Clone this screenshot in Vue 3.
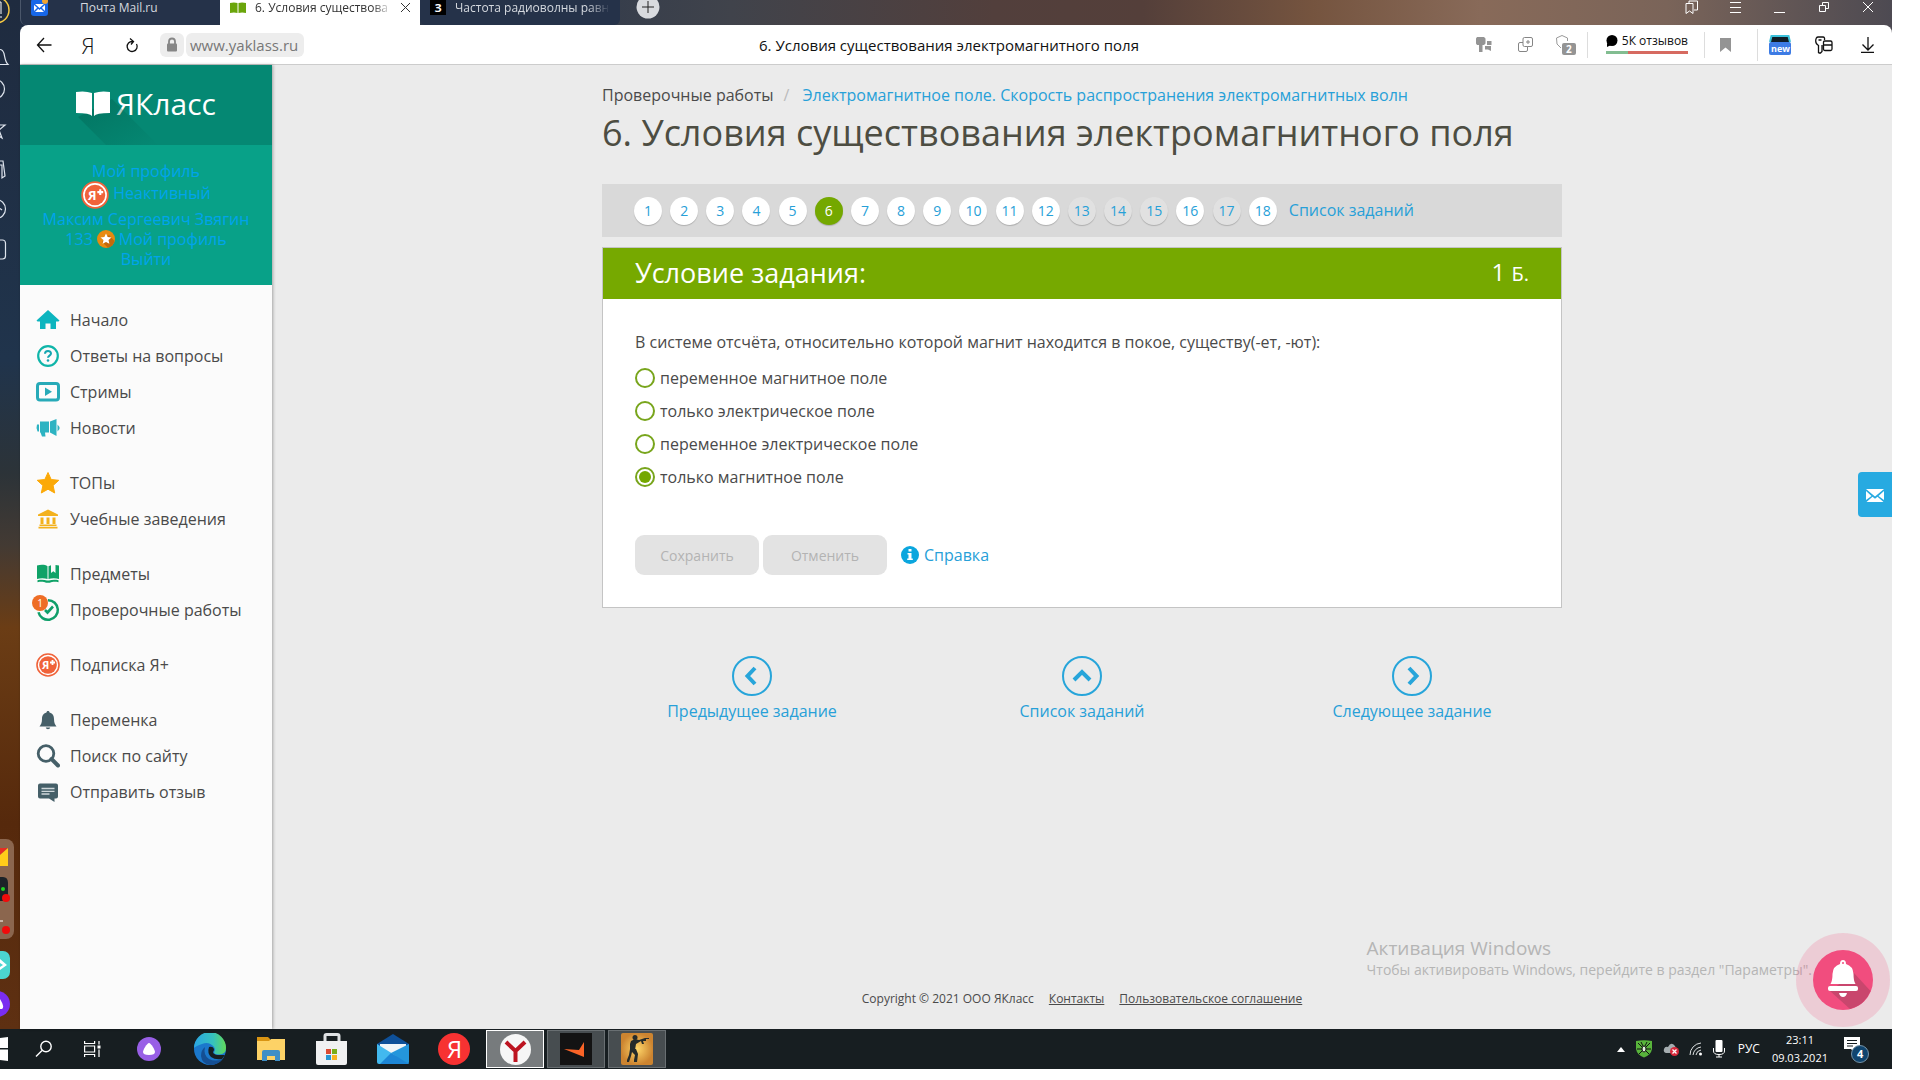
<script setup>
import { ref } from 'vue'

const answer = ref(3)
const options = [
  'переменное магнитное поле',
  'только электрическое поле',
  'переменное электрическое поле',
  'только магнитное поле',
]
const closed = [13, 14, 15, 17]

const plusIcon =
  '<circle cx="12" cy="12" r="11" fill="#fff" stroke="#f0633a" stroke-width="1.6"/><circle cx="12" cy="12" r="8.8" fill="#f0633a"/><text x="6" y="16" font-size="11" font-weight="700" font-family="Open Sans, sans-serif" fill="#fff">Я</text><path d="M14 9.5h5M16.5 7v5" stroke="#fff" stroke-width="1.8"/>'

const menu = [
  [
    { name: 'Начало', icon: '<path fill="#0cb5bf" d="M12 2 23.5 12.500l-1 1H20V21h-5.500v-5.500h-5V21H4v-7.500H1.500l-1-1z"/>' },
    {
      name: 'Ответы на вопросы',
      icon: '<circle cx="12" cy="12" r="9.800" fill="none" stroke="#0fb5a9" stroke-width="2.200"/><path d="M9 9.800C9 6 15 6.200 15 9.500c0 2.200-3 2-3 4.300" fill="none" stroke="#15a5b0" stroke-width="2"/><circle cx="12" cy="16.500" r="1.300" fill="#15a5b0"/>',
    },
    {
      name: 'Стримы',
      icon: '<rect x="1.500" y="3.500" width="21" height="16.500" rx="2.500" fill="none" stroke="#27aab8" stroke-width="3"/><path fill="#27aab8" d="M9 7.500 16 11.800 9 16z"/>',
    },
    {
      name: 'Новости',
      icon: '<path fill="#2db3c2" d="M1 8.500h2v7H1.500L0.500 12zM4 5.500h9v11H9l.5 4H6l-1.500-4H4zM14 5.500 20.500 3v17L14 16.500zM21.500 8.500 23.500 11v2l-2 2.500z"/>',
    },
  ],
  [
    { name: 'ТОПы', icon: '<path fill="#fba908" stroke="#fba908" stroke-linejoin="round" d="m12 1.500 3.200 7 7.600.8-5.700 5.200 1.600 7.500L12 18.200 5.300 22l1.600-7.500L1.200 9.300l7.600-.8z"/>' },
    {
      name: 'Учебные заведения',
      icon: '<path fill="#f3b11c" d="M12 2.500 22 7.500V9H2V7.500zM4.500 10.500h3V17h-3zM10.500 10.500h3V17h-3zM16.500 10.500h3V17h-3zM3.500 17.500h17v1.500h-17zM2.500 19.800h19V21.500h-19z"/>',
    },
  ],
  [
    {
      name: 'Предметы',
      icon: '<path fill="#0fa267" d="M1 3.500c4-1 8-1 10.500.8V17C8.500 16 4 16 1 17zM12.500 4.300 15 3.200V11l2.300-1.800L19.500 11V3l3.500.5V17c-3-1-7.500-1-10.500 0zM1.500 18.200c4-.8 7-.5 9.500.3h2c3-.8 6-1 9.500-.3v2C18 19.500 16 20 14 20.800h-4C8 20 6 19.500 1.500 20.200z"/>',
    },
    {
      name: 'Проверочные работы',
      badge: 1,
      icon: '<path d="M12 2.200a9.800 9.800 0 1 1-9.500 12" fill="none" stroke="#109f6a" stroke-width="2.500"/><path d="m9 12 2.500 2.500L17 8.500" fill="none" stroke="#109f6a" stroke-width="2.600"/>',
    },
  ],
  [{ name: 'Подписка Я+', icon: plusIcon }],
  [
    {
      name: 'Переменка',
      icon: '<path fill="#455f68" d="M12 3c1 0 1.500.7 1.500 1.500C17 5.500 18 8 18 11c0 4 1 5.500 2.500 7.500h-17C5 16.500 6 15 6 11c0-3 1-5.500 4.500-6.500C10.500 3.700 11 3 12 3zM9.800 19.500h4.400c-.3 2.300-4.100 2.300-4.400 0z"/>',
    },
    { name: 'Поиск по сайту', icon: '<circle cx="10" cy="9.500" r="7.800" fill="none" stroke="#455f68" stroke-width="2.800"/><path d="m15.500 15 6.500 6.500" stroke="#455f68" stroke-width="4" stroke-linecap="round"/>' },
    {
      name: 'Отправить отзыв',
      icon: '<path fill="#455f68" d="M4 3.500h16q2 0 2 2v11q0 2-2 2h-1.500V22L13 18.500H4q-2 0-2-2v-11q0-2 2-2z"/><path d="M5.500 8.500h13M5.500 11.300h13M5.500 14h8" stroke="#cfd7da" stroke-width="1.300"/>',
    },
  ],
]

// quick panel on the left edge, only its right side is visible
const rail = [
  '<path d="M0 35.500h8c-3-3-3-7-4-11-1-3-2-4-4-4"/>',
  '<circle cx="-5" cy="20" r="9.500"/>',
  '<path d="M-4 16h9l-6 5 3 8-6-4"/>',
  '<path d="M0 12h3l2 15-3 2V16H0"/>',
  '<circle cx="-4" cy="20" r="9.500"/><path d="M0 19.500 2 21"/>',
  '<rect x="-12" y="11" width="17.500" height="19" rx="3"/>',
]

const prevNext = [
  { name: 'Предыдущее задание', d: 'm23 12-7.500 8 7.500 8' },
  { name: 'Список заданий', d: 'm12 24 8-8 8 8' },
  { name: 'Следующее задание', d: 'm17 12 7.500 8-7.500 8' },
]
</script>

<template>
  <div class="screen">
    <div class="desktop">
      <aside class="rail">
        <svg width="20" height="29" fill="none"><circle cx="-4" cy="10" r="13" stroke="#f5c842" stroke-width="1.500" /><path d="M0 2h1v12M0 17h2" stroke="#fff" /></svg>
        <svg v-for="(r, i) in rail" :key="i" class="rail-icon" width="20" height="40" v-html="r"></svg>
        <div class="rail-panel">
          <svg width="14" height="100">
            <path d="M0 9h8L0 16z" fill="#e52e24" /><path d="M8 9v18H0V16z" fill="#ffcc1a" />
            <path d="M0 38h3q5 0 5 6v18H0z" fill="#1d2328" /><circle cx="3" cy="50" r="2" fill="#21d321" />
            <circle cx="6" cy="59" r="4" fill="#f00b0b" /><path d="M0 82h3" stroke="#fff" /><circle cx="6" cy="91" r="4" fill="#f00b0b" />
          </svg>
        </div>
        <svg class="rail-app" width="20" height="28"><rect x="-18" width="28" height="28" rx="7" fill="#4bd5cf" /><path d="M0 8l7 6-7 5v-3l3-2-3-2z" fill="#fff" /></svg>
        <svg class="rail-app" width="20" height="26"><circle cx="-3" cy="13" r="13" fill="#7a2df0" /><path d="M0 8q5 8 2 10H0z" fill="#fff" /></svg>
      </aside>

      <div class="browser">
        <header class="tabs">
          <div class="tab tab-mail">
            <svg width="17" height="17"><rect width="17" height="17" rx="3" fill="#1767e8" /><path d="M3 5h11v8H3z" fill="#fff" /><path d="m3 5 5.500 5L14 5M3 13l4-4M14 13l-4-4" stroke="#1767e8" fill="none" stroke-width="1.500" /><circle cx="14" cy="2" r="3" fill="#f0a532" /></svg>
            <span>Почта Mail.ru</span>
          </div>
          <div class="tab tab-active">
            <svg width="16" height="14"><path d="M0 2q4-1 7.500 0v10Q4 11 0 12zM8.500 2Q12 1 16 2v10q-4-1-7.500 0z" fill="#6aa50b" /></svg>
            <span class="fade">6. Условия существова</span>
            <button class="plain" aria-label="Закрыть вкладку"><svg width="9" height="9"><path d="m0 0 9 9M9 0 0 9" stroke="#333" /></svg></button>
          </div>
          <div class="tab">
            <b class="znanija">З</b>
            <span class="fade">Частота радиоволны равн</span>
          </div>
          <button class="plain new-tab" aria-label="Новая вкладка"><svg width="24" height="24"><circle cx="12" cy="12" r="11.500" fill="#d8dade" /><path d="M6 12h12M12 6v12" stroke="#222" /></svg></button>
          <div class="window-buttons">
            <button class="plain" aria-label="Коллекции"><svg width="14" height="14" fill="none" stroke="#fff"><path d="M1 3.500h7v10L4.500 11 1 13.500zM4 3V1h8.500v9H9" /></svg></button>
            <button class="plain" aria-label="Меню"><svg width="12" height="12" stroke="#fff"><path d="M0 1.500h11M0 6.500h11M0 11.500h11" /></svg></button>
            <button class="plain" aria-label="Свернуть"><svg width="12" height="12" stroke="#fff"><path d="M0 11.500h11" /></svg></button>
            <button class="plain" aria-label="Окно"><svg width="12" height="12" fill="none" stroke="#fff"><path d="M1.500 4.500h6v6h-6zM4.500 4V1.500h6v6H8" /></svg></button>
            <button class="plain" aria-label="Закрыть"><svg width="12" height="12" stroke="#fff"><path d="m1 1 10 10M11 1 1 11" /></svg></button>
          </div>
        </header>

        <div class="toolbar">
          <div class="tool-group">
            <button class="plain tool" aria-label="Назад"><svg width="16" height="16" fill="none" stroke="#111" stroke-width="1.300"><path d="M15.500 8H1.500M8 1 1.500 8 8 15" /></svg></button>
            <button class="plain tool yandex">Я</button>
            <button class="plain tool" aria-label="Обновить"><svg width="14" height="18" fill="none" stroke="#111" stroke-width="1.300"><path d="M11.500 8a5 5 0 1 1-4-2.500M5 2.500l3.500 3L6 8.500" /></svg></button>
            <span class="lock"><svg width="12" height="16"><path d="M3 7V4.500q0-3 3-3t3 3V7" fill="none" stroke="#868686" stroke-width="1.800" /><rect x="1" y="6.500" width="10" height="8" rx="1" fill="#868686" /></svg></span>
            <a href="#" class="url">www.yaklass.ru</a>
          </div>
          <span class="page-title">6. Условия существования электромагнитного поля</span>
          <div class="tool-group tool-right">
            <button class="plain tool-s" aria-label="Перевод"><svg width="16" height="16" fill="#949494"><path d="M1 0h7l1.500 1.500v5L8 8H6.500v7H3V8H1L0 6.500v-5zM11 4h4.500v4H11zM9 9h6v5l-3-1.500H9z" /></svg></button>
            <button class="plain tool-s" aria-label="Добавить"><svg width="15" height="15" fill="none" stroke="#858585"><path d="M5 5.500V2Q5 .5 6.500.5H13q1.500 0 1.500 1.500v6q0 1.500-1.500 1.500H9.500M5 5.500H2Q.5 5.500.5 7v6q0 1.500 1.500 1.500h6q1.500 0 1.500-1.500V9.500H6.500Q5 9.500 5 8zM10 3v4M8 5h4" /></svg></button>
            <button class="plain tool-s"><svg width="22" height="22"><path d="M12.500 7V4L7 1.500 1.500 4 2 10l4 4" fill="none" stroke="#9a9a9a" /><rect x="7" y="9" width="14" height="12" rx="2" fill="#949494" /><text x="11" y="19" font-size="10" font-weight="700" font-family="Open Sans, sans-serif" fill="#fff">2</text></svg></button>
            <div class="reviews">
              <span><svg width="12" height="12"><circle cx="6" cy="5.500" r="5.500" /><path d="M1 8v4l4-2z" /></svg>5К отзывов</span>
              <i class="rating"></i>
            </div>
            <button class="plain bookmark" aria-label="В закладки"><svg width="11" height="14"><path d="M0 0h11v14L5.500 9.500 0 14z" fill="#949494" /></svg></button>
            <div class="ext">
              <button class="plain tool"><svg width="22" height="20"><path d="M3 0h16l2 7H1z" fill="#111d27" /><path d="M1 7 2.500 1h17L21 7" fill="none" stroke="#3bc1db" stroke-width="2" /><rect y="7" width="22" height="13" rx="2" fill="#3d7be4" /><text x="2" y="17" font-size="9" font-weight="700" font-family="Open Sans, sans-serif" fill="#fff">new</text></svg></button>
              <button class="plain tool" aria-label="Пароли"><svg width="18" height="18" fill="none" stroke="#111" stroke-width="1.300"><path d="M3.500 17V9.500Q.7 8 .7 5q0-4 2.500-4H8q2 0 1.500 3M3.500 17h2l1.500-1.500V9M3.500 4h3M9.500 5h6q1.500 0 1.500 1.500V13q0 1.500-1.500 1.500H10q-1.500 0-1.500-1.500V6.500Q8.500 5 9.500 5zM8.500 9H17" /></svg></button>
              <button class="plain tool" aria-label="Загрузки"><svg width="14" height="16" fill="none" stroke="#111" stroke-width="1.300"><path d="M7 0v12.500M1.500 7.500 7 13l5.500-5.500M0 15.300h13" /></svg></button>
            </div>
          </div>
        </div>

        <div class="page">
          <aside class="sidebar">
            <a href="#" class="logo">
              <svg class="logo-shade" width="80" height="46" preserveAspectRatio="none"><defs><linearGradient id="shade" x1="0" y1="0" x2="1" y2="1"><stop offset="0" stop-color="#00604f" stop-opacity=".5" /><stop offset="1" stop-color="#00604f" stop-opacity="0" /></linearGradient></defs><path d="M0 18 34 0 80 46H28z" fill="url(#shade)" /></svg>
              <svg class="logo-book" width="34" height="26"><path d="M0 1q9-1.500 16 1v23Q14 22 0 22zM18 2q7-2.500 16-1v21q-14 0-16 3z" fill="#fff" /></svg>
              <span>ЯКласс</span>
            </a>
            <div class="profile">
              <a href="#">Мой профиль</a>
              <a href="#" class="status"><svg width="28" height="28" viewBox="0 0 24 24" v-html="plusIcon"></svg> Неактивный</a>
              <a href="#">Максим Сергеевич Звягин</a>
              <a href="#" class="points">133 <svg width="18" height="18"><circle cx="9" cy="9" r="9" fill="#e88a10" /><path d="M12 5 17.500 11A9 9 0 0 1 11 17.800L5 12z" fill="#c4690a" /><path d="m9 3.500 1.600 3.500 3.900.4-3 2.600.9 3.800L9 11.900l-3.400 1.900.9-3.800-3-2.600 3.900-.4z" fill="#fff" /></svg> Мой профиль</a>
              <a href="#">Выйти</a>
            </div>
            <nav class="menu">
              <ul v-for="(group, i) in menu" :key="i">
                <li v-for="item in group" :key="item.name">
                  <a href="#">
                    <svg width="24" height="24" viewBox="0 0 24 24" v-html="item.icon"></svg>
                    <span v-if="item.badge" class="badge">{{ item.badge }}</span>
                    {{ item.name }}
                  </a>
                </li>
              </ul>
            </nav>
          </aside>

          <main class="main">
            <div class="content">
              <div class="crumbs">
                <a href="#" class="crumb-root">Проверочные работы</a><i>/</i><a href="#">Электромагнитное поле. Скорость распространения электромагнитных волн</a>
              </div>
              <h1>6. Условия существования электромагнитного поля</h1>

              <nav class="pager">
                <template v-for="n in 18" :key="n"><a href="#" class="num" :class="{ current: n === 6, closed: closed.includes(n) }">{{ n }}</a>{{ ' ' }}</template>
                <a href="#" class="pager-list">Список заданий</a>
              </nav>

              <section class="card">
                <div class="card-head">
                  <h2>Условие задания:</h2>
                  <span class="score">1 <small>Б.</small></span>
                </div>
                <form class="card-body" @submit.prevent>
                  <p>В системе отсчёта, относительно которой магнит находится в покое, существу(-ет, -ют):</p>
                  <label v-for="(o, i) in options" :key="i" class="option">
                    <input v-model="answer" type="radio" name="answer" :value="i" />{{ o }}
                  </label>
                  <div class="actions">
                    <button type="button" class="btn" disabled>Сохранить</button>
                    <button type="button" class="btn" disabled>Отменить</button>
                    <a href="#" class="help"><svg width="18" height="18"><circle cx="9" cy="9" r="9" fill="#0ba6de" /><path d="M7.500 3h3v2.500h-3zM6.500 7h4v5.500h1.300V14H6.200v-1.500h1.300v-4h-1z" fill="#fff" /></svg>Справка</a>
                  </div>
                </form>
              </section>

              <nav class="steps">
                <a v-for="s in prevNext" :key="s.name" href="#">
                  <svg width="40" height="40" fill="none" stroke="#27a5da"><circle cx="20" cy="20" r="19" stroke-width="2" /><path :d="s.d" stroke-width="4" /></svg>
                  {{ s.name }}
                </a>
              </nav>
            </div>
            <footer class="footer">
              <span>Copyright © 2021 ООО ЯКласс</span>
              <a href="#">Контакты</a>
              <a href="#">Пользовательское соглашение</a>
            </footer>

            <button class="plain feedback" aria-label="Написать нам"><svg width="18" height="14"><path d="M0 1h18L9 8.500zM0 3l5.500 5L0 12zM18 3l-5.500 5 5.500 4zM6.500 8.800 9 10.800l2.500-2L17.500 14H.5z" fill="#fff" /></svg></button>
            <div class="activation">
              <div class="activation-title">Активация Windows</div>
              <div>Чтобы активировать Windows, перейдите в раздел "Параметры".</div>
            </div>
            <button class="plain bell" aria-label="Уведомления">
              <svg width="94" height="94">
                <circle cx="47" cy="47" r="47" fill="#f34573" fill-opacity=".18" />
                <circle cx="47" cy="47" r="30" fill="#f14d7e" />
                <path d="M58 40 74.500 58A30 30 0 0 1 54 76L34 58z" fill="#c9466d" />
                <path d="M44 31q0-4 3-4t3 4q7 2 7.500 10 0 7 2 10h-25q2-3 2-10Q37 33 44 31z" fill="#fff" />
                <circle cx="47" cy="30" r="1" fill="#f14d7e" />
                <rect x="32" y="53" width="30" height="5" rx="2" fill="#fff" />
                <path d="M43 60h8q-1 4-4 4t-4-4z" fill="#fff" />
              </svg>
            </button>
          </main>
        </div>
      </div>
    </div>

    <footer class="taskbar">
      <button class="plain start" aria-label="Пуск"><svg width="8" height="24" fill="#fff"><path d="M0 1 8 0v11H0zM0 12.500h8V24l-8-1z" /></svg></button>
      <div class="sys-group">
        <button class="plain sys" aria-label="Поиск"><svg width="18" height="18" fill="none" stroke="#fff" stroke-width="1.400"><circle cx="11" cy="6.500" r="5.200" /><path d="m7 10.500-6 6" /></svg></button>
        <button class="plain sys" aria-label="Представление задач"><svg width="17" height="16" fill="none" stroke="#fff" stroke-width="1.200"><path d="M.6 0v2.500h10V0M.6 5h10v6H.6zM.6 16v-2.500h10V16M15 0v3.500M15 8.500V16" /><path d="M13.500 4.500h3v3h-3z" fill="#fff" stroke="none" /></svg></button>
      </div>
      <button class="plain app" aria-label="Алиса"><svg width="24" height="24"><circle cx="12" cy="12" r="12" fill="#985fe6" /><path d="M12 6c2 0 6 7 6 9s-2 3-6 3-6-1-6-3 4-9 6-9z" fill="#fff" /></svg></button>
      <button class="plain app" aria-label="Edge">
        <svg width="32" height="32">
          <defs><linearGradient id="edge"><stop offset="0" stop-color="#2aa6e4" /><stop offset=".6" stop-color="#36c2bd" /><stop offset="1" stop-color="#62d958" /></linearGradient></defs>
          <circle cx="16" cy="16" r="16" fill="#1b78cc" />
          <path d="M0 15A16 16 0 0 1 32 15q0 6-7 6.500-5 0-5-2.500 2-2 0-5-5-6-12-3Q2 13 0 15z" fill="url(#edge)" />
          <path d="M11 14q-2 8 4 12 6 3 14 0-5 6-13 6Q8 31 7 23q0-6 4-9z" fill="#144f94" />
          <path d="M15 14q4-1 5 2 0 2-1 3 0 2 4 3h8l-3 4q-7 1-11-2-4-4-2-10z" fill="#171e21" />
        </svg>
      </button>
      <button class="plain app" aria-label="Проводник"><svg width="28" height="24"><path d="M0 0h11l2 2v5H0z" fill="#d99413" /><path d="M0 4h12l2-2h14v21H0z" fill="#fdd266" /><path d="M5 24V15q0-2 2-2h14q2 0 2 2v9h-5v-5h-8v5z" fill="#3f8fc6" /></svg></button>
      <button class="plain app" aria-label="Магазин"><svg width="32" height="32"><path d="M9 10V3q0-1.500 1.500-1.500h11Q23 1.500 23 3v7" fill="none" stroke="#dfe2e4" stroke-width="3" /><path d="M0 8h31v22q0 2-2 2H2q-2 0-2-2z" fill="#f0f1f2" /><path d="M10 16h5v5h-5z" fill="#db4b32" /><path d="M16 16h5v5h-5z" fill="#79ad19" /><path d="M10 22h5v5h-5z" fill="#2797d3" /><path d="M16 22h5v5h-5z" fill="#f8b321" /></svg></button>
      <button class="plain app" aria-label="Почта"><svg width="32" height="30"><path d="m0 10 16-10 16 10v10H0z" fill="#0e5099" /><path d="M3 10h26v12H3z" fill="#f0f5f8" /><path d="m0 10 32 20H2q-2 0-2-2z" fill="#42b9ef" /><path d="M32 10v18q0 2-2 2L14 19z" fill="#2496dc" /><path d="M14 19 32 30H3z" fill="#1d86d6" /></svg></button>
      <button class="plain app" aria-label="Яндекс"><svg width="32" height="32"><circle cx="16" cy="16" r="16" fill="#f73232" /><text x="9" y="25" font-size="24" font-family="Open Sans, sans-serif" fill="#fff">Я</text></svg></button>
      <button class="plain win win-active" aria-label="Яндекс.Браузер"><svg width="31" height="31"><circle cx="15.500" cy="15.500" r="15.500" fill="#f6f6f6" /><path d="m6 8 9.500 9L25 8M15.500 16v12" fill="none" stroke="#bd1420" stroke-width="4" /></svg></button>
      <button class="plain win" aria-label="FACEIT"><svg width="32" height="32"><path d="M0 0h32v32H0z" fill="#131313" /><path d="M4 16 19 17 24 9v15z" fill="#fa6427" /></svg></button>
      <button class="plain win" aria-label="CS:GO">
        <svg width="32" height="32">
          <defs><radialGradient id="cs"><stop offset="0" stop-color="#ffd76a" /><stop offset="1" stop-color="#cc8430" /></radialGradient></defs>
          <rect width="32" height="32" rx="2" fill="url(#cs)" />
          <g fill="#252b2a">
            <circle cx="14" cy="4.500" r="2.500" />
            <path d="m10 8 4-2 4 1 6-2h4v1h-3v2h-3l1 3h-2l-1-3-5 3-1 6H9V11z" />
            <path d="M9 16h6l2 5-1 8h-3v-2l1-5-3-3-1 4-2 6H6v-2l2-5z" />
          </g>
        </svg>
      </button>

      <div class="tray">
        <svg width="8" height="5"><path d="m0 5 4-5 4 5z" fill="#fff" /></svg>
        <svg width="18" height="18"><path d="M1 1q8-1.500 16 0v8q-1 6-8 8.500Q2 15 1 9z" fill="#58b43b" /><g fill="none" stroke="#111"><path d="m3 3 4 4M15 3l-4 4M2 9h14M4 14l4-4M14 14l-4-4M6 2l2 4M12 2l-2 4" /></g><ellipse cx="9" cy="9" rx="2" ry="3" fill="#e6f2e2" stroke="#111" /></svg>
        <svg width="16" height="16"><path d="M3 12q-3-1-2-4t4-2q3-6 7-1l3 7z" fill="#a5adb0" /><circle cx="11.500" cy="10.500" r="4.500" fill="#d8293b" /><path d="m9.500 8.500 4 4m0-4-4 4" stroke="#fff" stroke-width="1.300" /></svg>
        <svg width="14" height="14" fill="none" stroke="#dfe3e4"><path d="M1 13A12 12 0 0 1 12 1M4 13a9 9 0 0 1 8-8M7 13a6 6 0 0 1 5-5" /><circle cx="11.500" cy="12" r="1.500" fill="#fff" stroke="none" /></svg>
        <svg width="12" height="18" fill="none" stroke="#fff"><rect x="2.500" width="7" height="12" rx="1" fill="#fff" stroke="none" /><path d="M.5 8v3q0 3.500 5.500 3.500t5.500-3.500V8M6 14v3M3 17h6" /></svg>
        <span class="lang">РУС</span>
        <div class="clock"><span>23:11</span><span>09.03.2021</span></div>
        <svg width="26" height="28"><path d="M0 2h16v12h-5v4l-4-4H0z" fill="#fff" /><path d="M3 5.500h10M3 8.500h10M3 11h6" stroke="#171e21" stroke-width="1.200" /><circle cx="16" cy="19" r="8.500" fill="#10456f" stroke="#7593a8" /><text x="13" y="23" font-size="11" font-weight="700" font-family="Open Sans, sans-serif" fill="#fff">4</text></svg>
      </div>
    </footer>
  </div>
</template>

<style>
body {
  margin: 0;
  background: #fff;
}
</style>

<style scoped>
* {
  box-sizing: border-box;
}

.screen {
  display: flex;
  flex-direction: column;
  min-height: 100vh;
  padding: 0 28px 11px 0;
  font-family: "Open Sans", "Noto Sans", sans-serif;
  font-size: 16px;
  line-height: 24px;
  color: #4a4a4a;
}

svg {
  display: block;
  flex: none;
}

a {
  color: #27a0d8;
  text-decoration: none;
}

.plain {
  display: flex;
  align-items: center;
  justify-content: center;
  padding: 0;
  border: 0;
  background: none;
  font: inherit;
  cursor: pointer;
}

.desktop {
  display: flex;
  flex: 1;
}

.rail {
  display: flex;
  flex-direction: column;
  width: 20px;
  padding-bottom: 12px;
  background: linear-gradient(#1f2b3f, #20344c 35%, #2c3338 46%, #433a33 53%, #6b3d15 61%, #56290c 80%, #5e3012);
}

.rail-icon {
  fill: none;
  stroke: #dfe5ee;
  stroke-width: 1.2;
}

.rail-panel {
  width: 14px;
  margin-top: auto;
  border-radius: 0 8px 8px 0;
  background: #8b664e;
}

.rail-app {
  margin-top: 12px;
}

.browser {
  display: flex;
  flex: 1;
  flex-direction: column;
  min-width: 0;
  background: linear-gradient(90deg, #1f2d45, #313b4c 28%, #40434b 38%, #523f3c 52%, #543f3a 60%, #75543f 69%, #886a59 78%, #7a6459 88%, #4d4a52) top / 100% 40px no-repeat;
}

.tabs {
  display: flex;
  align-items: flex-start;
  height: 25px;
}

.tab {
  display: flex;
  align-items: center;
  gap: 9px;
  width: 200px;
  height: 25px;
  padding: 0 10px 10px;
  border-radius: 0 0 6px 6px;
  background: #253249;
  font-size: 12px;
  line-height: 15px;
  color: #d5d9df;
  white-space: nowrap;
}

.tab-mail {
  gap: 32px;
  border-left: 1px solid #4a566a;
}

.tab-active {
  border-radius: 0;
  background: #fff;
  color: #333;
}

.fade {
  flex: 1;
  mask-image: linear-gradient(90deg, #000 86%, transparent);
}

.znanija {
  width: 16px;
  height: 15px;
  background: #000;
  font-size: 11px;
  line-height: 15px;
  color: #fff;
  text-align: center;
}

.new-tab {
  width: 56px;
  height: 14px;
}

.window-buttons {
  display: flex;
  margin-left: auto;
  padding-right: 2px;
}

.window-buttons button {
  width: 44px;
  height: 14px;
}

.toolbar {
  display: grid;
  grid-template-columns: 1fr auto 1fr;
  align-items: center;
  height: 40px;
  padding: 0 2px;
  border-bottom: 1px solid #ccc;
  border-radius: 8px 8px 0 0;
  background: #fff;
}

.tool-group {
  display: flex;
  align-items: center;
}

.tool-right {
  justify-content: flex-end;
}

.tool {
  width: 44px;
  height: 32px;
}

.tool-s {
  width: 41px;
  height: 32px;
}

.yandex {
  font-size: 22px;
  font-weight: 300;
  color: #111;
}

.lock {
  display: flex;
  align-items: center;
  justify-content: center;
  width: 24px;
  height: 24px;
  margin: 0 2px 0 6px;
  border-radius: 6px;
  background: #ededed;
}

.url {
  height: 24px;
  padding: 0 6px 0 4px;
  border-radius: 6px;
  background: #ededed;
  font-size: 15px;
  line-height: 24px;
  color: #777;
}

.page-title {
  margin-right: 14px;
  font-size: 15px;
  color: #111;
}

.reviews {
  padding: 0 16px 4px 18px;
  border: solid #ddd;
  border-width: 0 1px;
  font-size: 12px;
  line-height: 18px;
  color: #111;
}

.reviews span {
  display: flex;
  gap: 4px;
  align-items: center;
}

.rating {
  display: block;
  height: 3px;
  margin-top: 1px;
  background: linear-gradient(90deg, #82bd91 27%, #d66a60 27%);
}

.bookmark {
  width: 40px;
}

.ext {
  display: flex;
  margin-left: 12px;
  border-left: 1px solid #ddd;
}

.page {
  display: flex;
  flex: 1;
}

.sidebar {
  width: 252px;
  background: #fbfbfb;
  box-shadow: 1px 0 3px rgba(0, 0, 0, 0.3);
  z-index: 1;
}

.logo {
  position: relative;
  display: flex;
  align-items: center;
  justify-content: center;
  gap: 6px;
  height: 80px;
  padding-bottom: 2px;
  background: #058873;
  overflow: hidden;
  font-size: 30px;
  line-height: 40px;
  color: #fff;
}

.logo-book {
  position: relative;
}

/* long shadow under the book */
.logo-shade {
  position: absolute;
  left: 58px;
  bottom: 0;
}

.profile {
  display: flex;
  flex-direction: column;
  align-items: center;
  height: 140px;
  padding-top: 16px;
  background: #08a188;
  line-height: 20px;
}

.profile a {
  color: #00a4ec;
}

.status,
.points {
  display: flex;
  gap: 4px;
}

.status {
  height: 28px;
  line-height: 24px;
}

.points svg {
  margin-top: 1px;
}

.menu {
  display: flex;
  flex-direction: column;
  gap: 19px;
  padding-top: 17px;
}

.menu ul {
  margin: 0;
  padding: 0;
  list-style: none;
}

.menu a {
  position: relative;
  display: flex;
  align-items: center;
  gap: 10px;
  height: 36px;
  padding-left: 16px;
  color: #4a4a4a;
}

.badge {
  position: absolute;
  left: 12px;
  top: 3px;
  width: 16px;
  height: 16px;
  border-radius: 50%;
  background: #ee6d25;
  font-size: 10px;
  line-height: 16px;
  color: #fff;
  text-align: center;
}

.main {
  position: relative;
  display: flex;
  flex: 1;
  flex-direction: column;
  align-items: center;
  background: #ebebeb;
}

.content {
  width: 100%;
  max-width: 960px;
  padding-top: 18px;
}

.crumbs i {
  margin: 0 13px 0 10px;
  font-style: normal;
  color: #bbb;
}

.crumb-root {
  color: #4a4a4a;
}

h1 {
  margin: 4px 0 29px;
  font-size: 36px;
  font-weight: 400;
  line-height: 44px;
  color: #4d4d42;
}

.pager {
  height: 53px;
  padding: 13px 32px 0;
  background: #d9d9d9;
}

.num {
  display: inline-block;
  width: 28px;
  height: 28px;
  margin-right: 4px;
  border-radius: 50%;
  background: #fff;
  box-shadow: 0 1px 1px rgba(0, 0, 0, 0.2);
  font-size: 14px;
  line-height: 28px;
  text-align: center;
}

.num.current {
  background: #74a800;
  color: #fff;
}

.num.closed {
  background: #e1e1e1;
}

.pager-list {
  margin-left: 4px;
}

.card {
  margin-top: 10px;
  border: 1px solid #c4c4c4;
  background: #fff;
}

.card-head {
  display: flex;
  align-items: center;
  justify-content: space-between;
  height: 51px;
  padding: 0 32px 2px;
  background: #76a900;
  color: #fff;
}

h2 {
  margin: 0;
  font-size: 27px;
  font-weight: 400;
  line-height: 36px;
}

.score {
  font-size: 24px;
}

.score small {
  font-size: 20px;
}

.card-body {
  padding: 31px 32px 32px;
}

.card-body p {
  margin: 0 0 7px;
}

.option {
  display: flex;
  align-items: center;
  gap: 5px;
  height: 33px;
}

.option input {
  appearance: none;
  width: 20px;
  height: 20px;
  margin: 0;
  border: 2px solid #78a51c;
  border-radius: 50%;
}

.option input:checked {
  background: #74a800;
  background-clip: content-box;
  padding: 2px;
}

.actions {
  display: flex;
  align-items: center;
  gap: 4px;
  margin-top: 42px;
}

.btn {
  width: 124px;
  height: 40px;
  padding: 0;
  border: 0;
  border-radius: 9px;
  background: #e3e3e3;
  font: 14px "Open Sans", sans-serif;
  color: #b3b3b3;
}

.help {
  display: flex;
  align-items: center;
  gap: 5px;
  margin-left: 10px;
}

.steps {
  display: grid;
  grid-template-columns: repeat(3, 1fr);
  margin: 48px -15px 0;
}

.steps a {
  display: flex;
  flex-direction: column;
  align-items: center;
  gap: 3px;
}

.footer {
  display: flex;
  gap: 15px;
  margin-top: auto;
  padding-bottom: 20px;
  font-size: 12px;
  line-height: 20px;
}

.footer a {
  color: #4a4a4a;
  text-decoration: underline;
}

.feedback {
  position: absolute;
  top: 407px;
  right: 0;
  width: 34px;
  height: 45px;
  border-radius: 4px 0 0 4px;
  background: #27aae1;
}

.activation {
  position: absolute;
  right: 80px;
  bottom: 48px;
  font-size: 14px;
  line-height: 22px;
  color: #b5b5b5;
}

.activation-title {
  font-size: 19px;
}

.bell {
  position: absolute;
  right: 2px;
  bottom: 2px;
}

.taskbar {
  display: flex;
  height: 40px;
  background: #171e21;
}

.start {
  width: 8px;
}

.sys-group {
  display: flex;
  margin: 0 2px 0 12px;
}

.sys {
  width: 48px;
}

.app {
  width: 61px;
}

.win {
  width: 58px;
  height: 38px;
  margin: 1px 1px 0 2px;
  border: 1px solid #696f72;
  background: #474d50;
}

.win-active {
  border-color: #fff;
  background: #777b7d;
}

.tray {
  display: flex;
  align-items: center;
  gap: 10px;
  margin-left: auto;
  padding-right: 22px;
  font-size: 12px;
  line-height: 18px;
  color: #fff;
}

.clock {
  display: flex;
  flex-direction: column;
  align-items: center;
  margin: 0 6px 0 2px;
  font-size: 11px;
}

.lang {
  margin-left: 3px;
}
</style>
